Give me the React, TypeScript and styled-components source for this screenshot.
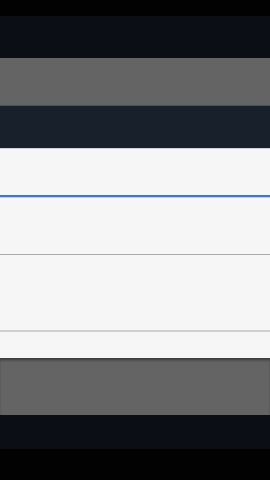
import React from "react";
import styled, { createGlobalStyle } from "styled-components";

const Global = createGlobalStyle`
  html, body { margin: 0; padding: 0; background: #020203; }
  body { font-family: Roboto, "Liberation Sans", sans-serif; }
  #root { width: 270px; height: 480px; overflow: hidden; }
`;

const Screen = styled.div`
  width: 270px;
  height: 480px;
  display: flex;
  flex-direction: column;
  background: #020203;
`;

const StatusBar = styled.div`
  height: 16px;
  background: #020203;
`;

const ActionBar = styled.div`
  height: 42px;
  background: #0b0e15;
`;

const Dim = styled.div<{ $h: number; $shadow?: boolean }>`
  height: ${(p) => p.$h}px;
  background: #646464;
  box-shadow: ${(p) => (p.$shadow ? "inset 0 3px 3px -1px rgba(0,0,0,0.45)" : "none")};
`;

const Dialog = styled.div`
  display: flex;
  flex-direction: column;
  border-top: 1px solid #4a525c;
`;

const TitleBar = styled.div`
  height: 42px;
  background: #18212b;
  border-bottom: 1px solid #c9d3de;
`;

const Body = styled.div`
  background: #f6f6f6;
  display: flex;
  flex-direction: column;
`;

const Field = styled.div`
  height: 46px;
  border-bottom: 2px solid #3d77d6;
  box-shadow: 0 1px 0 #b9cdf0;
`;

const Section = styled.div<{ $h: number; $line: string; $lw: number }>`
  height: ${(p) => p.$h}px;
  border-bottom: ${(p) => p.$lw}px solid ${(p) => p.$line};
`;

const Buttons = styled.div`
  height: 26px;
`;

const NavBar = styled.div`
  height: 34px;
  background: #0b0e14;
`;

const Bottom = styled.div`
  flex: 1;
  background: #020203;
`;

export default function App() {
  return (
    <Screen>
      <Global />
      <StatusBar />
      <ActionBar />
      <Dim $h={47} />
      <Dialog>
        <TitleBar />
        <Body>
          <Field />
          <Section $h={57} $line="#a9a9a9" $lw={1} />
          <Section $h={75} $line="#cfcfcf" $lw={2} />
          <Buttons />
        </Body>
      </Dialog>
      <Dim $h={57} $shadow />
      <NavBar />
      <Bottom />
    </Screen>
  );
}
